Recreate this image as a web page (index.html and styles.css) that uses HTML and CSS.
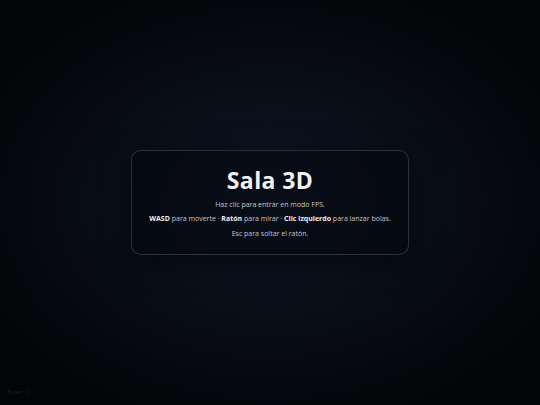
FILE: index.html
```html
<!DOCTYPE html>
<html lang="es">
<head>
<meta charset="utf-8">
<title>Sala 3D</title>
<link rel="stylesheet" href="styles.css">
</head>
<body>
<div class="scene">
  <div class="overlay">
    <div class="card">
      <h1 class="title">Sala 3D</h1>
      <p class="line">Haz clic para entrar en modo FPS.</p>
      <p class="line"><b>WASD</b> para moverte · <b>Ratón</b> para mirar · <b>Clic izquierdo</b> para lanzar bolas.</p>
      <p class="line">Esc para soltar el ratón.</p>
    </div>
  </div>
  <div class="hud">Bolas: 0</div>
</div>
</body>
</html>
```
FILE: styles.css
```css
html, body {
  margin: 0;
  padding: 0;
  width: 100%;
  height: 100%;
  overflow: hidden;
  background: #030406;
}
.scene {
  position: relative;
  width: 540px;
  height: 405px;
  font-family: "Open Sans", "Noto Sans", sans-serif;
  background: radial-gradient(ellipse 62% 60% at 50% 50%, #0e1523 0%, #0a0f1a 40%, #05070c 80%, #030405 100%);
}
.overlay {
  height: 100%;
  display: flex;
  align-items: center;
  justify-content: center;
}
.card {
  width: 278px;
  box-sizing: border-box;
  padding: 15px 10px 13px;
  border: 1px solid rgba(150, 158, 175, 0.26);
  border-radius: 10px;
  background: rgba(2, 4, 8, 0.45);
  box-shadow: 0 8px 30px rgba(0, 0, 0, 0.5);
  text-align: center;
  color: #c4c7cd;
}
.title {
  margin: 0 0 4px;
  font-size: 23px;
  line-height: 28px;
  font-weight: 700;
  color: #f0f1f3;
  letter-spacing: 0.4px;
}
.line {
  margin: 0;
  font-size: 7px;
  line-height: 14.2px;
}
.line b {
  font-weight: 700;
  color: #eceef1;
}
.hud {
  position: absolute;
  left: 7px;
  bottom: 9px;
  font-size: 6px;
  color: #1c2029;
}
```
